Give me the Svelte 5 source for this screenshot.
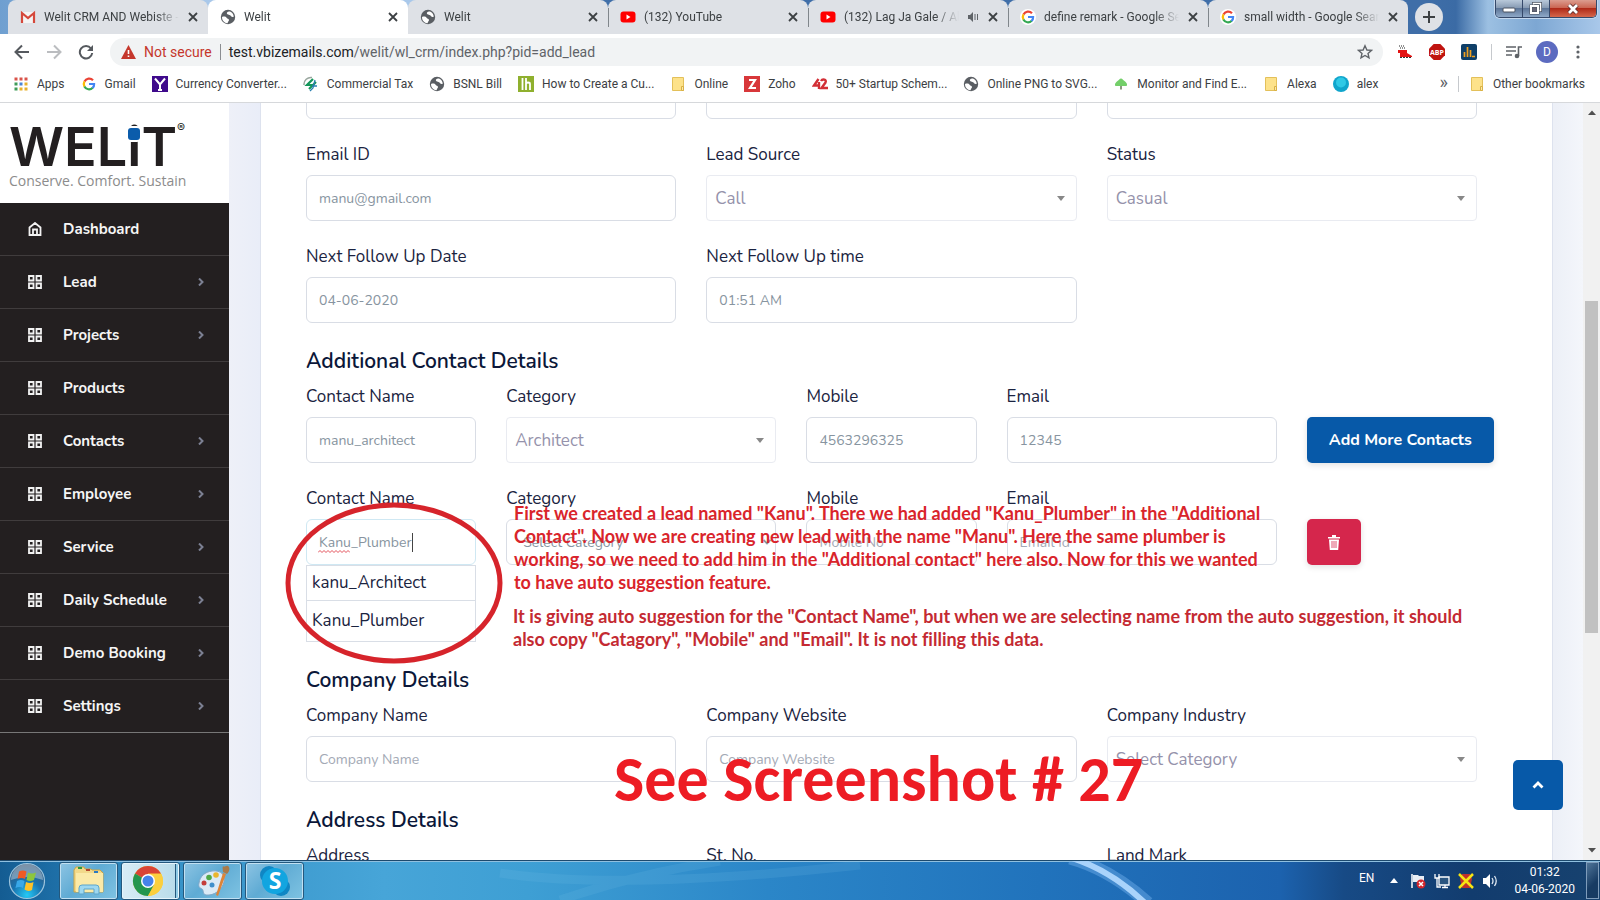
<script>
  const tabs = [
    { title: 'Welit CRM AND Webiste -', icon: 'gmail' },
    { title: 'Welit', icon: 'globe', active: true },
    { title: 'Welit', icon: 'globe' },
    { title: '(132) YouTube', icon: 'youtube' },
    { title: '(132) Lag Ja Gale / Abhi', icon: 'youtube', audio: true },
    { title: 'define remark - Google Search', icon: 'google' },
    { title: 'small width - Google Search', icon: 'google' }
  ];
  const bookmarks = [
    ['apps', 'Apps'],
    ['google', 'Gmail'],
    ['currency', 'Currency Converter...'],
    ['tax', 'Commercial Tax'],
    ['globe', 'BSNL Bill'],
    ['hub', 'How to Create a Cu...'],
    ['folder', 'Online'],
    ['zoho', 'Zoho'],
    ['startup', '50+ Startup Schem...'],
    ['globe', 'Online PNG to SVG...'],
    ['tree', 'Monitor and Find E...'],
    ['folder', 'Alexa'],
    ['ball', 'alex']
  ];
  const menu = [
    ['Dashboard', false],
    ['Lead', true],
    ['Projects', true],
    ['Products', false],
    ['Contacts', true],
    ['Employee', true],
    ['Service', true],
    ['Daily Schedule', true],
    ['Demo Booking', true],
    ['Settings', true]
  ];
</script>

{#snippet icon(name)}
  <svg class="ico" viewBox="0 0 16 16" width="16" height="16" aria-hidden="true">
    {#if name === 'gmail'}
      <rect x="1" y="3" width="14" height="11" fill="#f4f4f4" />
      <path d="M2 14V4l6 5 6-5v10" fill="none" stroke="#d5483b" stroke-width="2.2" />
    {:else if name === 'globe'}
      <circle cx="8" cy="8" r="7.2" fill="#5a5e63" />
      <path d="M2 8c2-1 4-.4 4.600.8.6 1.200 2.400.8 2.400 2.200 0 1.200-1 1.400-1.400 3.200C4.200 14 2 11.500 2 8zM7 3.500c1.500-1.700 4-1 5.400.8.8 1 1.300 2.200 1.300 3.400-1.500.8-2.700-.2-3.200-1.200C9.800 5.300 6 6 7 3.500z" fill="#fff" />
    {:else if name === 'youtube'}
      <rect x="0.500" y="2.500" width="15" height="11" rx="3" fill="#f00" />
      <path d="M6.500 5.500v5l4-2.500z" fill="#fff" />
    {:else if name === 'google'}
      <circle cx="8" cy="8" r="8" fill="#fff" />
      <g fill="none" stroke-width="2.200">
        <path d="M12 4.200A5.200 5.200 0 0 0 3.500 5.500" stroke="#ea4335" />
        <path d="M3.500 5.400a5.300 5.300 0 0 0 0 5.200" stroke="#fbbc05" />
        <path d="M3.400 10.500A5.200 5.200 0 0 0 11.700 11.800" stroke="#34a853" />
        <path d="M8 8h5.100a5.100 5.100 0 0 1-1.600 4" stroke="#4285f4" />
      </g>
    {:else if name === 'apps'}
      {#each [0, 1, 2] as r}
        {#each [0, 1, 2] as c}
          <rect x={1.500 + c * 5} y={1.500 + r * 5} width="3" height="3" fill={[['#d9534a', '#d9534a', '#d9534a'], ['#3f9b58', '#4a84d6', '#e8b12c'], ['#3f9b58', '#e8b12c', '#e8b12c']][r][c]} />
        {/each}
      {/each}
    {:else if name === 'currency'}
      <rect width="16" height="16" fill="#3f0a8c" />
      <path d="M3 2.500l5 6 5-6M8 8v6M6 14h4" fill="none" stroke="#fff" stroke-width="2" />
    {:else if name === 'tax'}
      <path d="M1 9a7 7 0 0 1 8-7.500" fill="none" stroke="#9aa79f" stroke-width="1.500" />
      <path d="M10 3L4 9h6M13 6L6 13" fill="none" stroke="#14965a" stroke-width="2.200" />
      <path d="M12 4l-2 8-3 3M9 10h5" fill="none" stroke="#2a7fb0" stroke-width="1.300" />
    {:else if name === 'hub'}
      <rect width="16" height="16" fill="#8fb02e" />
      <path d="M4.500 2v12M8 2v12M8 8c0-2 4-2 4 0v6" fill="none" stroke="#fff" stroke-width="1.800" />
    {:else if name === 'folder'}
      <path d="M2.500 1.500h11v13h-11z" fill="#fde28a" stroke="#e3c05a" />
      <path d="M11.500 10.500h2v4h-2z" fill="#fbe9ab" stroke="#d9b145" />
    {:else if name === 'zoho'}
      <rect width="16" height="16" fill="#d8373a" />
      <path d="M5 4h6l-5 8h6" fill="none" stroke="#fff" stroke-width="2.200" />
    {:else if name === 'startup'}
      <path d="M6.500 3L2 9.500h6M7 6v7" fill="none" stroke="#d22f36" stroke-width="2.400" />
      <path d="M9 5c1.500-2.500 6-1.500 4.500 1.500L9.500 12H16" fill="none" stroke="#d22f36" stroke-width="2.400" />
    {:else if name === 'tree'}
      <path d="M8 2.500c1.500 0 2 1.500 3.500 2.500S15 8.500 13.500 10H2.500C1 8.500 3 6 4.500 5S6.500 2.500 8 2.500z" fill="#74cf6a" />
      <path d="M7 10h2v3.500H7z" fill="#8a9a80" />
    {:else if name === 'ball'}
      <circle cx="8" cy="8" r="8" fill="#10a5cc" />
      <circle cx="8" cy="6.500" r="5" fill="#2fc9e6" />
    {/if}
  </svg>
{/snippet}

{#snippet chosen(id, value)}
  <div class="pick">
    <select {id}><option>{value}</option></select>
    <svg width="8" height="5" viewBox="0 0 8 5" aria-hidden="true"><path d="M0 0h8L4 5z" fill="#888" /></svg>
  </div>
{/snippet}

<div class="screen">
  <header class="browser">
    <div class="strip">
      <div class="tabs">
        {#each tabs as t}
          <div class="tab" class:active={t.active}>
            {@render icon(t.icon)}
            <span class="title">{t.title}</span>
            {#if t.audio}
              <svg width="12" height="12" viewBox="0 0 12 12" aria-hidden="true"><path d="M1 4h2l3-3v10L3 8H1z" fill="#5f6368" /><path d="M8 3v6M10.500 3v6" stroke="#5f6368" /></svg>
            {/if}
            <button class="close" aria-label="Close tab"><svg width="10" height="10" viewBox="0 0 10 10"><path d="M1 1l8 8M9 1L1 9" stroke="#3c4043" stroke-width="1.800" /></svg></button>
          </div>
        {/each}
      </div>
      <button class="newtab" aria-label="New tab"><svg width="12" height="12" viewBox="0 0 12 12"><path d="M6 0v12M0 6h12" stroke="#3c4043" stroke-width="2" /></svg></button>
      <div class="win">
        <button aria-label="Minimize"><svg width="14" height="12" viewBox="0 0 14 12"><rect x="1" y="5" width="12" height="4" rx="1" fill="#fff" stroke="#4b5360" /></svg></button>
        <button aria-label="Restore"><svg width="14" height="14" viewBox="0 0 14 14"><rect x="4.500" y="1.500" width="7" height="7" fill="none" stroke="#4b5360" stroke-width="3" /><rect x="4.500" y="1.500" width="7" height="7" fill="none" stroke="#fff" stroke-width="1.500" /><rect x="2" y="4" width="7" height="7" fill="#667" stroke="#4b5360" stroke-width="3" /><rect x="2" y="4" width="7" height="7" fill="none" stroke="#fff" stroke-width="2" /></svg></button>
        <button class="x" aria-label="Close"><svg width="14" height="12" viewBox="0 0 14 12"><path d="M3 2l8 8M11 2l-8 8" stroke="#5b2c2c" stroke-width="4.500" /><path d="M3 2l8 8M11 2l-8 8" stroke="#fff" stroke-width="2.800" /></svg></button>
      </div>
    </div>

    <div class="toolbar">
      <button class="nav" aria-label="Back"><svg width="16" height="16" viewBox="0 0 16 16"><path d="M15 8H2M8 1.500L1.500 8 8 14.500" fill="none" stroke="#55595e" stroke-width="2" /></svg></button>
      <button class="nav" aria-label="Forward"><svg width="16" height="16" viewBox="0 0 16 16"><path d="M1 8h13M8 1.500L14.500 8 8 14.500" fill="none" stroke="#bbbdc0" stroke-width="2" /></svg></button>
      <button class="nav" aria-label="Reload"><svg width="16" height="16" viewBox="0 0 16 16"><path d="M13 4.500A6.200 6.200 0 1 0 14.200 9" fill="none" stroke="#55595e" stroke-width="2" /><path d="M15 1v6H9z" fill="#55595e" /></svg></button>
      <div class="omni">
        <svg width="15" height="14" viewBox="0 0 15 14" aria-hidden="true"><path d="M7.500 0L15 14H0z" fill="#c5372c" /><path d="M7.500 5v4M7.500 10.500v1.500" stroke="#fff" stroke-width="1.600" /></svg>
        <span class="warn">Not secure</span>
        <span class="url"><b>test.vbizemails.com</b>/welit/wl_crm/index.php?pid=add_lead</span>
        <svg width="16" height="16" viewBox="0 0 16 16" aria-hidden="true"><path d="M8 1.800l1.900 4.200 4.500.4-3.400 3 1 4.500L8 11.500l-4 2.400 1-4.500-3.400-3 4.500-.4z" fill="none" stroke="#5f6368" stroke-width="1.400" /></svg>
      </div>
      <div class="ext">
        <svg width="16" height="16" viewBox="0 0 16 16" aria-hidden="true"><path d="M2 2h6M3 4h5" stroke="#222" stroke-dasharray="1 1" /><path d="M1 6h9v3l5 3v1H3V9H1z" fill="#e31313" /><path d="M3 13.500h12" stroke="#333" stroke-dasharray="2 1" /></svg>
        <svg width="16" height="16" viewBox="0 0 16 16" aria-hidden="true"><path d="M4.700 0h6.600L16 4.700v6.600L11.300 16H4.700L0 11.300V4.700z" fill="#c01410" /><text x="8" y="10.500" text-anchor="middle" class="abp">ABP</text></svg>
        <svg width="16" height="16" viewBox="0 0 16 16" aria-hidden="true"><rect width="16" height="16" rx="2" fill="#0f3f68" /><path d="M3.500 13V8M6.500 13V3M9.500 13V6M11 12.500h3" stroke="#f0a020" stroke-width="1.700" /></svg>
        <i class="bar"></i>
        <svg width="16" height="14" viewBox="0 0 16 14" aria-hidden="true"><path d="M0 2h10M0 6h10M0 10h6" stroke="#5f6368" stroke-width="1.600" /><path d="M12.500 11V2H16" fill="none" stroke="#5f6368" stroke-width="1.600" /><circle cx="11" cy="11" r="2.300" fill="#5f6368" /></svg>
        <span class="avatar">D</span>
        <svg width="4" height="14" viewBox="0 0 4 14" aria-hidden="true"><circle cx="2" cy="2" r="1.600" fill="#5f6368" /><circle cx="2" cy="7" r="1.600" fill="#5f6368" /><circle cx="2" cy="12" r="1.600" fill="#5f6368" /></svg>
      </div>
    </div>

    <nav class="marks" aria-label="Bookmarks">
      {#each bookmarks as [i, label]}
        <a href="#top">{@render icon(i)}{label}</a>
      {/each}
      <span class="more">»</span>
      <a class="other" href="#top">{@render icon('folder')}Other bookmarks</a>
    </nav>
  </header>

  <main>
    <aside>
      <div class="logo">
        <div class="word">WEL<span class="dot">i</span>T<small>®</small></div>
        <div class="tag">Conserve. Comfort. Sustain</div>
      </div>
      <nav aria-label="Main">
        {#each menu as [label, sub], n}
          <a href="#top">
            <svg width="14" height="14" viewBox="0 0 14 14" aria-hidden="true" fill="none" stroke="#f2f2f2" stroke-width="1.800">
              {#if n === 0}
                <path d="M1.500 13V5.500L7 1l5.500 4.500V13zM5 13V7.500h4V13" />
              {:else}
                <path d="M1 1h4.500v4.500H1zM8.500 1H13v4.500H8.500zM1 8.500h4.500V13H1zM8.500 8.500H13V13H8.500z" />
              {/if}
            </svg>
            <span>{label}</span>
            {#if sub}
              <svg width="6" height="8" viewBox="0 0 6 8" aria-hidden="true"><path d="M1 0.500L4.500 4 1 7.500" fill="none" stroke="#7c8093" stroke-width="2" /></svg>
            {/if}
          </a>
        {/each}
      </nav>
    </aside>

    <div class="page">
      <form class="card" onsubmit={(e) => e.preventDefault()}>
        <div class="row">
          <div class="four"><input aria-label="Name" /></div>
          <div class="four"><input aria-label="Mobile" /></div>
          <div class="four"><input aria-label="Alternate mobile" /></div>
        </div>
        <div class="row">
          <div class="four"><label for="email">Email ID</label><input id="email" value="manu@gmail.com" /></div>
          <div class="four"><label for="source">Lead Source</label>{@render chosen('source', 'Call')}</div>
          <div class="four"><label for="status">Status</label>{@render chosen('status', 'Casual')}</div>
        </div>
        <div class="row">
          <div class="four"><label for="fdate">Next Follow Up Date</label><input id="fdate" value="04-06-2020" /></div>
          <div class="four"><label for="ftime">Next Follow Up time</label><input id="ftime" value="01:51 AM" /></div>
        </div>

        <h2>Additional Contact Details</h2>
        <div class="row">
          <div class="two"><label for="cn1">Contact Name</label><input id="cn1" value="manu_architect" /></div>
          <div class="three"><label for="cat1">Category</label>{@render chosen('cat1', 'Architect')}</div>
          <div class="two"><label for="mob1">Mobile</label><input id="mob1" value="4563296325" /></div>
          <div class="three"><label for="em1">Email</label><input id="em1" value="12345" /></div>
          <div class="two act"><button class="add" type="button">Add More Contacts</button></div>
        </div>
        <div class="row">
          <div class="two">
            <label for="cn2">Contact Name</label>
            <div class="typed">
              <input id="cn2" class="focus" value="Kanu_Plumber" spellcheck="false" />
              <div class="marker" aria-hidden="true">
                <svg width="32" height="3" viewBox="0 0 32 3"><path d="M0 2.500l2-2 2 2 2-2 2 2 2-2 2 2 2-2 2 2 2-2 2 2 2-2 2 2 2-2 2 2 2-2 2 2" fill="none" stroke="#e0404a" stroke-width="0.900" /></svg>
                <i></i>
              </div>
            </div>
            <ul class="hints"><li>kanu_Architect</li><li>Kanu_Plumber</li></ul>
          </div>
          <div class="three">
            <label for="cat2">Category</label>
            <div class="pick plain">
              <select id="cat2"><option>Select Category</option></select>
              <svg width="8" height="6" viewBox="0 0 8 6" aria-hidden="true"><path d="M0.500 1L4 4.500 7.500 1" fill="none" stroke="#8b98a3" stroke-width="1.800" /></svg>
            </div>
          </div>
          <div class="two"><label for="mob2">Mobile</label><input id="mob2" placeholder="Mobile No" /></div>
          <div class="three"><label for="em2">Email</label><input id="em2" placeholder="Email Id" /></div>
          <div class="two act">
            <button class="del" type="button" aria-label="Delete contact"><svg width="12" height="15" viewBox="0 0 12 15"><path d="M0 2h12v1.500H0zM4 0h4v2H4zM1 4.500h10L10.200 15H1.800z" fill="#fff" /><path d="M4 6v7M6 6v7M8 6v7" stroke="#d5264c" stroke-width="0.800" /></svg></button>
          </div>
        </div>

        <h2>Company Details</h2>
        <div class="row">
          <div class="four"><label for="co">Company Name</label><input id="co" placeholder="Company Name" /></div>
          <div class="four"><label for="web">Company Website</label><input id="web" placeholder="Company Website" /></div>
          <div class="four"><label for="ind">Company Industry</label>{@render chosen('ind', 'Select Category')}</div>
        </div>

        <h2>Address Details</h2>
        <div class="row">
          <div class="four"><label for="ad">Address</label><input id="ad" /></div>
          <div class="four"><label for="st">St. No.</label><input id="st" /></div>
          <div class="four"><label for="lm">Land Mark</label><input id="lm" /></div>
        </div>
      </form>
      <button class="up" aria-label="Back to top"><svg width="12" height="8" viewBox="0 0 12 8"><path d="M1.500 6.500L6 2l4.500 4.500" fill="none" stroke="#fff" stroke-width="2.800" /></svg></button>
    </div>

    <div class="scroll" aria-hidden="true">
      <svg width="8" height="5" viewBox="0 0 8 5"><path d="M0 5h8L4 0.500z" fill="#505050" /></svg>
      <i></i>
      <svg width="8" height="5" viewBox="0 0 8 5"><path d="M0 0h8L4 4.500z" fill="#505050" /></svg>
    </div>
  </main>

  <footer>
    <svg class="glow" viewBox="0 0 1600 39" preserveAspectRatio="none" aria-hidden="true">
      <path d="M560 39Q640 12 720 0M500 12Q620 30 860 4" fill="none" stroke="#7cc3ea" stroke-width="9" opacity="0.140" />
      <path d="M1070 -3Q1110 8 1148 42" fill="none" stroke="#7db9f2" stroke-width="13" opacity="0.400" />
      <path d="M1072 -3Q1112 10 1145 42" fill="none" stroke="#a9d3fb" stroke-width="6" />
    </svg>
    <button class="orb" aria-label="Start">
      <svg width="38" height="38" viewBox="0 0 38 38">
        <defs><radialGradient id="orb" cx="50%" cy="90%" r="85%"><stop offset="0" stop-color="#25c9f5" /><stop offset="0.500" stop-color="#1873b0" /><stop offset="1" stop-color="#37587a" /></radialGradient></defs>
        <circle cx="19" cy="19" r="17.500" fill="url(#orb)" stroke="#9cc4dd" stroke-width="1.200" />
        <path d="M3 18a16 16 0 0 1 32 0q-16-6-32 0z" fill="#fff" opacity="0.350" />
        <path d="M11 9.500q4-2 7.500 0L17 17q-3.500-2-7.500 0z" fill="#ee5a24" />
        <path d="M20 10.500q4 2 8 0L26 18q-4 2-7.500 0z" fill="#8cc63e" />
        <path d="M9 19q4-2 7.500 0L15 26q-3.500-2-7.500 0z" fill="#39a8e8" />
        <path d="M18 20q4 2 7.500 0L24 28q-4 2-7.500-.5z" fill="#fdc228" />
      </svg>
    </button>
    <button class="task" aria-label="Explorer">
      <svg width="34" height="32" viewBox="0 0 34 32">
        <path d="M2 5l2-3h8l1 2h6l1 1h8l3 3v19H2z" fill="#f2d98a" stroke="#c9a548" /><path d="M4 8h27v19H4z" fill="#fbeaa8" />
        <path d="M6 3h4" stroke="#2c9a3c" stroke-width="2" /><path d="M14 5h4" stroke="#b5482c" stroke-width="2" /><path d="M22 7h4" stroke="#2b7ac0" stroke-width="2" />
        <path d="M7 29v-6q0-3 3-3h14q3 0 3 3v6h-5v-5H12v5z" fill="#9ed8f0" stroke="#5da5cb" />
      </svg>
    </button>
    <button class="task on" aria-label="Chrome">
      <svg width="32" height="32" viewBox="0 0 32 32">
        <circle cx="16" cy="16" r="15" fill="#fcc934" /><path d="M16 16L3 8.500A15 15 0 0 1 29 8.500H16z" fill="#d94436" />
        <path d="M3 8.500A15 15 0 0 0 16 31l6-11.500-6-3.500z" fill="#23964f" /><path d="M16 9h13.300A15 15 0 0 1 16 31l6.500-11z" fill="#fbcf3e" />
        <circle cx="16" cy="16" r="7" fill="#fff" /><circle cx="16" cy="16" r="5.500" fill="#4683ea" />
      </svg>
    </button>
    <button class="task" aria-label="Paint">
      <svg width="34" height="32" viewBox="0 0 34 32">
        <path d="M16 6c9-1 14 4 12 11-2 8-10 14-18 13-4-1-2-5-4-6s-4-2-3-6C4 11 9 7 16 6z" fill="#dbeaf6" stroke="#7fa6c6" />
        <circle cx="8" cy="18" r="2.500" fill="#c43d3a" /><circle cx="13" cy="12.500" r="2.800" fill="#4fa846" /><circle cx="20" cy="10" r="2.800" fill="#eab52c" /><circle cx="16" cy="20" r="2.500" fill="#3f8fcb" />
        <path d="M27 8l3 1-8 22-2-1z" fill="#dd8438" /><path d="M27 1c1 2 3-1 5 0s2 5-1 8l-4-2c0-2-1-4 0-6z" fill="#a97a4a" />
      </svg>
    </button>
    <button class="task" aria-label="Skype">
      <svg width="32" height="32" viewBox="0 0 32 32">
        <circle cx="10" cy="10" r="9" fill="#0f86c4" /><circle cx="22" cy="22" r="9" fill="#0f86c4" /><circle cx="16" cy="16" r="13" fill="#12a5e0" />
        <text x="16" y="24" text-anchor="middle" class="sk">S</text>
      </svg>
    </button>
    <div class="tray">
      <span class="en">EN</span>
      <svg class="hid" width="8" height="5" viewBox="0 0 8 5" aria-hidden="true"><path d="M0 5h8L4 0z" fill="#fff" /></svg>
      <svg width="16" height="16" viewBox="0 0 16 16" aria-hidden="true"><path d="M2 1v14" stroke="#fff" stroke-width="1.500" /><path d="M3 2h5l1 1h5v6H3z" fill="#e8eef5" /><circle cx="11" cy="11" r="4.500" fill="#d4262c" /><path d="M9 9l4 4M13 9l-4 4" stroke="#fff" stroke-width="1.500" /></svg>
      <svg width="16" height="16" viewBox="0 0 16 16" aria-hidden="true"><path d="M5 4h10v8H5zM8 14.500h6M11 12v3" fill="#2a5580" stroke="#fff" stroke-width="1.300" /><path d="M1 1v4h4V1M3 5v9h4" fill="none" stroke="#fff" stroke-width="1.300" /></svg>
      <svg width="16" height="16" viewBox="0 0 16 16" aria-hidden="true"><path d="M4 1h8l2 5-2 9H4L2 6z" fill="#c0312c" /><path d="M1 1l14 14M15 1L1 15" stroke="#f7e413" stroke-width="2.500" /></svg>
      <svg width="16" height="16" viewBox="0 0 16 16" aria-hidden="true"><path d="M1 5h3l4-4v14l-4-4H1z" fill="#fff" /><path d="M10 5q2 3 0 6M12.500 3q3.500 5 0 10" fill="none" stroke="#dfe8f2" stroke-width="1.300" /></svg>
      <div class="clock"><span>01:32</span><span>04-06-2020</span></div>
      <i class="desk"></i>
    </div>
  </footer>

  <svg class="ring" width="220" height="164" viewBox="0 0 220 164" aria-hidden="true"><ellipse cx="110" cy="82" rx="106" ry="78" fill="none" stroke="#d6242b" stroke-width="5" /></svg>
  <div class="note n1">
    First we created a lead named "Kanu". There we had added "Kanu_Plumber" in the "Additional<br />Contact". Now we are creating new lead with the name "Manu". Here the same plumber is<br />working, so we need to add him in the "Additional contact" here also. Now for this we wanted<br />to have auto suggestion feature.
  </div>
  <div class="note n2">
    It is giving auto suggestion for the "Contact Name", but when we are selecting name from the auto suggestion, it should<br />also copy "Catagory", "Mobile" and "Email". It is not filling this data.
  </div>
  <div class="big">See Screenshot # 27</div>
</div>

<style>
  :global(body) { margin: 0; overflow: hidden; }
  .screen { position: relative; height: 100vh; display: flex; flex-direction: column; font-family: "Nunito", "Open Sans", sans-serif; background: #fff; overflow: hidden; }
  .screen * { box-sizing: border-box; }
  button { border: 0; background: none; padding: 0; display: flex; align-items: center; justify-content: center; font: inherit; }
  svg { flex: none; display: block; }
  a { color: inherit; text-decoration: none; }

  .browser { font-family: "Segoe UI", Selawik, Roboto, sans-serif; font-size: 12px; color: #3c4043; border-bottom: 1px solid #d6d8db; }
  .strip { height: 34px; display: flex; align-items: center; padding-left: 8px; background: linear-gradient(90deg, #6f9fd0 0, #a9c8ea 13%, #a9c8ea 30%, #3f6ea8 38%, #3f6ea8 89%, #3b6ba5 91%, #9cc0e2 93%, #7da7d3 96%, #a9c8ea 100%); }
  .tabs { display: flex; flex: 0 1 1400px; height: 34px; min-width: 0; }
  .tab { flex: 1 1 0; min-width: 0; display: flex; align-items: center; gap: 8px; padding: 0 9px 0 12px; background: #dee1e6; border-radius: 8px 8px 0 0; position: relative; }
  .tab:nth-child(n + 4)::before { content: ""; position: absolute; left: 0; top: 8px; width: 1px; height: 19px; background: #80868b; }
  .active { background: #fff; }
  .title { flex: 1; overflow: hidden; white-space: nowrap; mask-image: linear-gradient(90deg, #000 calc(100% - 24px), transparent); }
  .close { width: 12px; height: 16px; }
  .newtab { width: 28px; height: 28px; border-radius: 50%; background: #dee1e6; margin-left: 7px; }
  .win { margin-left: auto; margin-right: 3px; align-self: flex-start; display: flex; height: 18px; border: 1px solid #35496a; border-top: 0; border-radius: 0 0 5px 5px; overflow: hidden; box-shadow: 0 0 0 1px #c4d8ee; }
  .win button { width: 27px; background: linear-gradient(#b9c9da, #8397b0 50%, #5d7698 50%, #8fa9c8); border-right: 1px solid #35496a; }
  .win button.x { width: 46px; border: 0; background: linear-gradient(#dc9d8f, #c9604c 50%, #b02a18 50%, #d5674c); }

  .toolbar { display: flex; align-items: center; height: 36px; padding: 0 20px 0 14px; }
  .nav { width: 16px; margin-right: 16px; }
  .omni { flex: 1; height: 28px; border-radius: 14px; background: #f1f3f4; display: flex; align-items: center; padding: 0 10px 0 11px; font-size: 14px; }
  .warn { color: #c5372c; margin-left: 8px; padding-right: 8px; border-right: 1px solid #8a8d91; }
  .url { flex: 1; margin-left: 8px; color: #5f6368; }
  .url b { font-weight: 400; color: #202124; }
  .ext { display: flex; align-items: center; gap: 16px; margin-left: 14px; }
  .abp { font: 700 7px "Open Sans", sans-serif; fill: #fff; }
  .bar { width: 1px; height: 16px; background: #c6c9cd; margin: 0 -2px; }
  .avatar { width: 22px; height: 22px; border-radius: 50%; background: #5c6bc0; color: #fff; display: flex; align-items: center; justify-content: center; margin: 0 2px 0 -2px; }
  .marks { display: flex; align-items: center; height: 32px; padding: 0 15px 4px 13px; gap: 16px; white-space: nowrap; }
  .marks a { display: flex; align-items: center; gap: 8px; }
  .more { margin-left: auto; font-size: 18px; line-height: 16px; padding-bottom: 4px; color: #5f6368; }
  .other { border-left: 1px solid #c6c9cd; padding-left: 10px; margin-left: -6px; }

  main { flex: 1; min-height: 0; display: flex; overflow: hidden; }
  aside { flex: 0 0 229px; background: #231f20; }
  .logo { height: 100px; background: #fff; padding: 18px 0 0 9px; display: flex; flex-direction: column; }
  .word { font: 600 54px/52px Inter, sans-serif; color: #231f20; display: flex; }
  .word small { font: 400 12px/14px Inter, sans-serif; }
  .dot { position: relative; }
  .dot::before { content: ""; position: absolute; left: 1px; top: 7px; width: 12px; height: 12px; border-radius: 3px; background: #0b5cab; box-shadow: 0 0 0 2px #fff; }
  .tag { font: 400 14px/16px "Open Sans", sans-serif; color: #8c8c8c; white-space: nowrap; }
  aside a { display: flex; align-items: center; height: 53px; padding: 0 25px 0 28px; border-bottom: 1px solid #403c3d; color: #f5f5f5; font-size: 15px; font-weight: 700; }
  aside a:last-child { border-bottom-color: #777; }
  aside a span { flex: 1; margin-left: 21px; }

  .page { flex: 1; min-width: 0; position: relative; padding: 0 30px 0 31px; background: linear-gradient(90deg, #eef0f8 0, #e9edf8 31px, #edf0f7 98%, #f4f6fb 100%); }
  .card { background: #fff; border: solid #dde2ee; border-width: 0 1px; margin-top: -30px; padding: 0 75px 0 45px; display: flex; flex-direction: column; gap: 24px; }
  .row { display: grid; grid-template-columns: repeat(12, minmax(0, 1fr)); column-gap: 30px; }
  .two { grid-column: span 2; }
  .three { grid-column: span 3; }
  .four { grid-column: span 4; }
  label { display: block; font-size: 17px; line-height: 24px; margin-bottom: 8px; color: #1a2340; white-space: nowrap; }
  h2 { margin: 0 0 -14px; font-size: 21px; line-height: 28px; font-weight: 600; color: #0b1739; }
  input, select { display: block; width: 100%; height: 46px; border: 1px solid #d9dde5; border-radius: 6px; background: #fff; padding: 0 12px; font: 400 14px "Nunito", "Open Sans", sans-serif; color: #8794a0; outline: 0; }
  input::placeholder { color: #a3a9b5; }
  select { appearance: none; font-size: 17px; padding: 0 8px; border-color: #e9ebf1; border-radius: 4px; color: #9592ab; }
  .pick { display: grid; align-items: center; }
  .pick > * { grid-area: 1 / 1; }
  .pick svg { justify-self: end; margin-right: 12px; }
  .plain select { font-size: 14px; padding: 0 16px; border-color: #d9dde5; border-radius: 6px; color: #8794a0; }
  .plain svg { margin-right: 5px; }
  .act { padding-top: 32px; }
  .add, .del { height: 46px; border-radius: 5px; color: #fff; box-shadow: 0 2px 6px #0000001f; }
  .add { width: 187px; background: #0759a8; font-size: 16px; font-weight: 700; white-space: nowrap; }
  .del { width: 54px; background: #d5264c; }
  .typed { display: grid; }
  .typed > * { grid-area: 1 / 1; }
  .focus { border-color: #cfe8f3; }
  .marker { display: flex; align-items: center; justify-content: space-between; padding: 0 63px 0 12px; pointer-events: none; }
  .marker svg { align-self: flex-end; margin-bottom: 12px; }
  .marker i { width: 1px; height: 19px; background: #444; }
  .hints { list-style: none; margin: 0; padding: 0; border: 1px solid #d9dee6; font-size: 17px; color: #1a2340; }
  .hints li { padding: 0 5px; height: 35px; line-height: 34px; border-bottom: 1px solid #d9dee6; }
  .hints li:last-child { border: 0; height: 40px; line-height: 40px; }
  .up { position: absolute; right: 20px; bottom: 50px; width: 50px; height: 50px; border-radius: 5px; background: #0759a8; }
  .scroll { flex: 0 0 17px; background: #f1f1f1; display: flex; flex-direction: column; align-items: center; padding: 7px 0; }
  .scroll i { width: 13px; flex: 0 0 332px; margin: 186px 0 auto; background: #c1c1c1; }

  footer { flex: 0 0 40px; position: relative; display: flex; align-items: center; gap: 3px; padding-left: 8px; border-top: 1px solid #1d4a6e; box-shadow: inset 0 1px #8fc0e0; background: linear-gradient(90deg, #145c92 0, #1c6ca4 3%, #3591c6 10%, #47a5d8 24%, #3e9fd4 33%, #2b86c8 48%, #2173bc 65%, #1c62ae 80%, #174a85 84%, #123c6e 92%, #17426f 100%); font-family: "Segoe UI", Selawik, Roboto, sans-serif; }
  .glow { position: absolute; inset: 0; width: 100%; height: 100%; }
  .orb { width: 38px; height: 38px; margin-right: 10px; position: relative; }
  .task { position: relative; width: 59px; height: 38px; border: 1px solid #24587d; border-radius: 3px; background: linear-gradient(135deg, #8dc4e3 0, #5fabd4 45%, #7fc3e2 100%); box-shadow: inset 0 0 0 1px #c0e0f2; }
  .on { padding-right: 5px; background: linear-gradient(90deg, #d8ecf6 0, #b9dcea 53px, #24587d 53px, #24587d 54px, #8fcbe6 54px); box-shadow: inset 0 0 0 1px #e6f5fc; }
  .sk { font: 700 23px "Open Sans", sans-serif; fill: #fff; }
  .tray { position: relative; margin-left: auto; display: flex; align-items: center; gap: 8px; height: 100%; color: #fff; font-size: 12px; padding-right: 1px; }
  .en { margin: -6px 8px 0 0; }
  .hid { margin-right: 4px; }
  .clock { display: flex; flex-direction: column; align-items: center; line-height: 17px; margin-left: 8px; }
  .desk { width: 13px; height: 37px; border: 1px solid #7f9cbb; background: linear-gradient(135deg, #4f7498, #173b63 60%); margin-left: 3px; }

  .ring { position: absolute; left: 284px; top: 501px; }
  .note, .big { position: absolute; font-family: Lato, sans-serif; font-weight: 700; font-variant-ligatures: none; white-space: nowrap; color: #d9242b; }
  .note { font-size: 18px; line-height: 23px; }
  .n1 { left: 514px; top: 502px; }
  .n2 { left: 513px; top: 605px; color: #c42a32; }
  .big { left: 614px; top: 743px; font-family: Carlito, Calibri, Lato, sans-serif; font-size: 64px; line-height: 72px; color: #ed1c24; }
</style>
